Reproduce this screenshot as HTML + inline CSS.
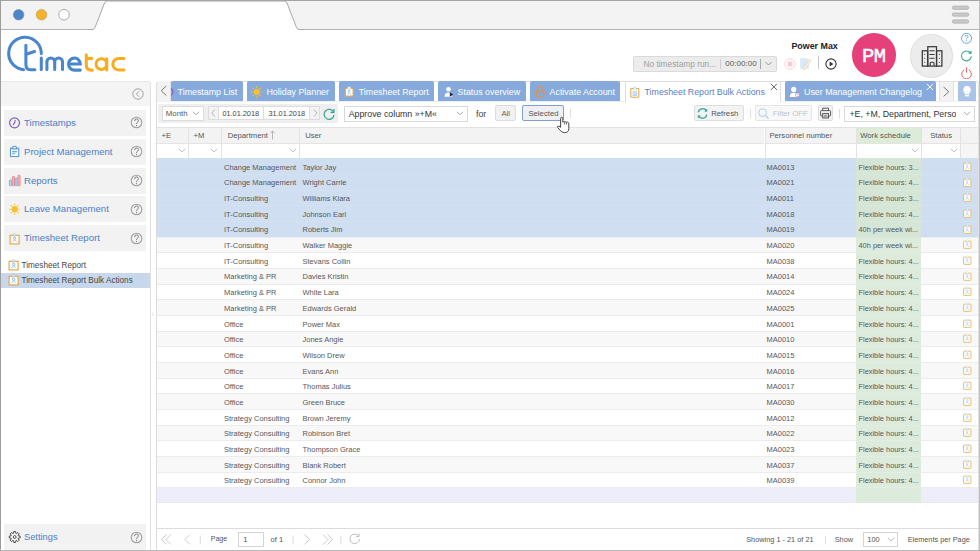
<!DOCTYPE html>
<html><head><meta charset="utf-8">
<style>
*{box-sizing:border-box;margin:0;padding:0}
html,body{width:980px;height:551px;overflow:hidden;background:#fff;font-family:"Liberation Sans",sans-serif;color:#333}
.a{position:absolute}
.nw{white-space:nowrap}
.mi{position:absolute;left:4px;width:142px;height:26px;background:#f2f2f2}
.mi .t{position:absolute;left:20px;top:7px;font-size:9.6px;color:#4a7fc6;white-space:nowrap}
.mi .q{position:absolute;left:126.5px;top:7px;width:11.5px;height:11.5px}
.tab{position:absolute;top:81px;height:20px;background:#86aadc;border-radius:2px 2px 0 0;color:#fff;font-size:8.85px}
.tab .t{position:absolute;top:5.5px;white-space:nowrap}
.row{position:absolute;left:157px;width:821px;height:15.67px;font-size:7.5px;color:#585858}
.row span{position:absolute;top:4.5px;white-space:nowrap}
.ws{position:absolute;left:856px;width:65px;height:15.67px;font-size:7.4px;color:#585858}
.ws span{position:absolute;left:2.5px;top:4.5px;white-space:nowrap}
.hd{position:absolute;top:128px;height:15px;background:#f3f3f3;font-size:7.7px;color:#555}
.hd span{position:absolute;top:2.9px;white-space:nowrap}
.ft{position:absolute;top:143px;height:15px;background:#fff;border-top:1px solid #e4e4e4}
.chev{position:absolute;width:6px;height:4px}
.btn{position:absolute;border:1px solid #d4d4d4;border-radius:2px;background:#f1f1f1;font-size:7.76px;color:#666}
.btn span{position:absolute;white-space:nowrap}
.pg{position:absolute;font-size:7.6px;color:#555;white-space:nowrap}

</style></head><body>
<!-- browser chrome -->
<svg class="a" style="left:0;top:0" width="980" height="31" viewBox="0 0 980 31">
<rect x="0" y="0" width="980" height="30" fill="#f3f3f3"/>
<line x1="0" y1="0.5" x2="980" y2="0.5" stroke="#a4a4a4" stroke-width="1"/>
<line x1="0" y1="29.5" x2="980" y2="29.5" stroke="#b2b2b2" stroke-width="1"/>
<path d="M90 30.5 L92 29.5 Q94 29.5 95 27.5 L104.5 3 Q105.5 1 107.5 1 L284 1 Q286 1 287 3 L296.5 27.5 Q297.5 29.5 299.5 29.5 L302 30.5 Z" fill="#fff" stroke="none"/>
<path d="M88 29.5 L92 29.5 Q94 29.5 95 27.5 L104.5 3 Q105.5 1 107.5 1 L284 1 Q286 1 287 3 L296.5 27.5 Q297.5 29.5 299.5 29.5 L304 29.5" fill="none" stroke="#a8a8a8" stroke-width="1"/>
<rect x="90" y="30" width="212" height="1" fill="#fff"/>
<circle cx="18.6" cy="14.7" r="5.3" fill="#4a86c8" stroke="#7a8ea8" stroke-width="0.6"/>
<circle cx="41.5" cy="14.7" r="5.3" fill="#f5b32c" stroke="#b89a5a" stroke-width="0.6"/>
<circle cx="64" cy="14.7" r="5.3" fill="#fff" stroke="#a0a0a0" stroke-width="0.9"/>
<rect x="952.2" y="6" width="16.6" height="3.4" rx="1.7" fill="#c8c8c8" stroke="#a8a8a8" stroke-width="0.6"/>
<rect x="952.2" y="12.9" width="16.6" height="3.4" rx="1.7" fill="#c8c8c8" stroke="#a8a8a8" stroke-width="0.6"/>
<rect x="952.2" y="19.8" width="16.6" height="3.4" rx="1.7" fill="#c8c8c8" stroke="#a8a8a8" stroke-width="0.6"/>
</svg>
<!-- logo -->
<svg class="a" style="left:0;top:30px" width="140" height="50" viewBox="0 30 140 50">
<g fill="none" stroke="#4a86cc" stroke-width="3.05" stroke-linecap="round">
<path d="M41.3 53.6 A16.3 16.3 0 1 0 23.6 69.7"/>
<path d="M25.9 45.3 V64.4 Q25.9 69.8 31.3 69.8 H34.9"/>
<path d="M26.2 54.2 L34.5 51.5"/>
<path d="M41.3 58.1 V69.6"/>
<path d="M46.9 69.5 V61.9 A3.9 3.9 0 0 1 54.7 61.9 V69.5 M54.7 61.9 A3.9 3.9 0 0 1 62.5 61.9 V69.5"/>
<path d="M68.5 64 H80.3 A5.9 6 0 1 0 74.4 70.1 H80.3"/>
</g>
<g fill="none" stroke="#f7ad1e" stroke-width="3.05" stroke-linecap="round">
<path d="M86.3 54.7 V65.3 Q86.3 70.1 91.1 70.1 H92.3"/>
<path d="M86.4 58.4 H91.8"/>
<circle cx="101.4" cy="64.1" r="5.3"/>
<path d="M106.7 58.8 V70"/>
<path d="M124 58.4 H118.6 A5.7 5.7 0 0 0 118.6 69.9 H124"/>
</g>
</svg>
<!-- header right -->
<div class="a" style="left:633px;top:56.3px;width:144px;height:15.5px;background:#ececec;border:1px solid #dadada;border-radius:2px"></div>
<div class="a nw" style="left:643.5px;top:59.4px;font-size:8.33px;color:#a0a0a0">No timestamp run...</div>
<div class="a" style="left:719.6px;top:58.6px;width:1px;height:10.5px;background:#d0d0d0"></div>
<div class="a nw" style="left:725.2px;top:59px;font-size:8.1px;color:#5a5a5a">00:00:00</div>
<div class="a" style="left:760.2px;top:58.6px;width:1px;height:10.5px;background:#a8a8a8"></div>
<svg class="a" style="left:764px;top:60px" width="9" height="7"><path d="M1.5 2 L4.5 5 L7.5 2" fill="none" stroke="#888" stroke-width="0.9"/></svg>
<div class="a nw" style="left:791.4px;top:40.6px;font-size:8.9px;font-weight:bold;color:#222">Power Max</div>
<svg class="a" style="left:782.5px;top:56.5px" width="14" height="14"><circle cx="7" cy="7" r="5.2" fill="none" stroke="#fbd4d8" stroke-width="1"/><rect x="4.6" y="4.5" width="4.9" height="5" fill="#f7cdd6"/></svg>
<svg class="a" style="left:799px;top:57px" width="14" height="14" viewBox="0 0 14 14"><path d="M1.2 1.3 H8.5 L9.8 2.6 V11.7 H1.2 Z" fill="#d6e8fa"/><path d="M4.3 11.2 L10.6 2.6 L12 3.6 L5.8 12.2 L4 12.6 Z" fill="#fff" stroke="#f2c880" stroke-width="0.7"/></svg>
<div class="a" style="left:818.2px;top:56.4px;width:0.8px;height:12.9px;background:#c8c8c8"></div>
<svg class="a" style="left:823.5px;top:56.5px" width="14" height="14"><circle cx="7" cy="7" r="5.1" fill="none" stroke="#333" stroke-width="1.1"/><path d="M5.6 4.6 L9.4 7 L5.6 9.4 Z" fill="#333"/></svg>
<div class="a" style="left:852px;top:33.4px;width:43.6px;height:43.6px;border-radius:50%;background:#e6407a"></div>
<div class="a nw" style="left:852px;top:44.6px;width:43.6px;text-align:center;font-size:20.5px;color:#fff;font-family:'Liberation Mono',monospace;letter-spacing:-0.5px;-webkit-text-stroke:0.5px #fff">PM</div>
<div class="a" style="left:909.7px;top:34.3px;width:43.8px;height:43.8px;border-radius:50%;background:#ececec;border:1px solid #dedede"></div>
<svg class="a" style="left:915px;top:40px" width="35" height="32" viewBox="915 40 35 32">
<g fill="none" stroke="#383838" stroke-width="1.25">
<rect x="922.3" y="50.8" width="5.3" height="15.3"/>
<rect x="936.6" y="50.8" width="5.3" height="15.3"/>
<rect x="927.8" y="46.7" width="8.7" height="19.4"/>
</g>
<g stroke="#383838" stroke-width="1.05" stroke-linecap="round">
<path d="M929.8 50.8 H934.2 M929.8 54.5 H934.2 M929.8 58.3 H934.2"/>
</g>
<g fill="#383838">
<circle cx="924.7" cy="54.2" r="0.55"/><circle cx="924.7" cy="58.3" r="0.55"/><circle cx="924.7" cy="62.3" r="0.55"/>
<circle cx="939.4" cy="54.2" r="0.55"/><circle cx="939.4" cy="58.3" r="0.55"/><circle cx="939.4" cy="62.3" r="0.55"/>
</g>
<path d="M930.2 66 V63.2 Q930.2 62.2 931.2 62.2 H933 Q934 62.2 934 63.2 V66" fill="none" stroke="#383838" stroke-width="1.1"/>
</svg>
<svg class="a" style="left:960px;top:32.3px" width="13" height="13"><circle cx="6.5" cy="6.3" r="5" fill="none" stroke="#5aa0dc" stroke-width="0.95"/><path d="M5 4.9 Q5 3.3 6.5 3.3 Q8 3.3 8 4.6 Q8 5.5 7.1 5.9 Q6.5 6.2 6.5 7 V7.3" fill="none" stroke="#5a9ada" stroke-width="0.85"/><circle cx="6.5" cy="8.8" r="0.55" fill="#5a9ada"/></svg>
<svg class="a" style="left:960px;top:48.5px" width="13" height="13"><path d="M10.4 4.1 A4.9 4.9 0 1 0 11.3 7.2" fill="none" stroke="#3aa597" stroke-width="1.05"/><path d="M8 4.6 L11.6 5 L11.4 1.4 Z" fill="#3aa597"/></svg>
<svg class="a" style="left:960px;top:65.5px" width="13" height="13"><path d="M4.2 3.8 A4.8 4.8 0 1 0 8.8 3.8" fill="none" stroke="#e86a6a" stroke-width="1"/><path d="M6.5 1.2 V6.5" stroke="#e86a6a" stroke-width="1"/></svg>
<!-- sidebar -->
<div class="a" style="left:1px;top:80.5px;width:150px;height:470px;border-top:1px solid #e6e6e6;border-right:1px solid #e0e0e0;border-radius:0 2px 0 0"></div>
<div class="a" style="left:1px;top:81.5px;width:149px;height:24.5px;background:#f4f4f4"></div>
<svg class="a" style="left:131.4px;top:87.4px" width="14" height="14"><circle cx="7" cy="7" r="5.2" fill="none" stroke="#9a9a9a" stroke-width="0.9"/><path d="M8.2 4.2 L5.4 7 L8.2 9.8" fill="none" stroke="#9a9a9a" stroke-width="0.9"/></svg>
<div class="mi" style="top:110px"><div class="t">Timestamps</div></div>
<div class="mi" style="top:138.8px"><div class="t">Project Management</div></div>
<div class="mi" style="top:167.6px"><div class="t">Reports</div></div>
<div class="mi" style="top:196.4px"><div class="t">Leave Management</div></div>
<div class="mi" style="top:225.2px"><div class="t">Timesheet Report</div></div>
<svg class="a" style="left:129.8px;top:116.4px" width="13" height="13"><circle cx="6.5" cy="6.5" r="5.3" fill="none" stroke="#a2a2a2" stroke-width="1.1"/><path d="M4.6 5.1 Q4.6 2.9 6.5 2.9 Q8.4 2.9 8.4 4.7 Q8.4 5.8 7.3 6.4 Q6.5 6.8 6.5 7.8 V8.1" fill="none" stroke="#7e7e7e" stroke-width="1"/><circle cx="6.5" cy="9.7" r="0.65" fill="#7e7e7e"/></svg>
<svg class="a" style="left:129.8px;top:145.2px" width="13" height="13"><circle cx="6.5" cy="6.5" r="5.3" fill="none" stroke="#a2a2a2" stroke-width="1.1"/><path d="M4.6 5.1 Q4.6 2.9 6.5 2.9 Q8.4 2.9 8.4 4.7 Q8.4 5.8 7.3 6.4 Q6.5 6.8 6.5 7.8 V8.1" fill="none" stroke="#7e7e7e" stroke-width="1"/><circle cx="6.5" cy="9.7" r="0.65" fill="#7e7e7e"/></svg>
<svg class="a" style="left:129.8px;top:174px" width="13" height="13"><circle cx="6.5" cy="6.5" r="5.3" fill="none" stroke="#a2a2a2" stroke-width="1.1"/><path d="M4.6 5.1 Q4.6 2.9 6.5 2.9 Q8.4 2.9 8.4 4.7 Q8.4 5.8 7.3 6.4 Q6.5 6.8 6.5 7.8 V8.1" fill="none" stroke="#7e7e7e" stroke-width="1"/><circle cx="6.5" cy="9.7" r="0.65" fill="#7e7e7e"/></svg>
<svg class="a" style="left:129.8px;top:202.8px" width="13" height="13"><circle cx="6.5" cy="6.5" r="5.3" fill="none" stroke="#a2a2a2" stroke-width="1.1"/><path d="M4.6 5.1 Q4.6 2.9 6.5 2.9 Q8.4 2.9 8.4 4.7 Q8.4 5.8 7.3 6.4 Q6.5 6.8 6.5 7.8 V8.1" fill="none" stroke="#7e7e7e" stroke-width="1"/><circle cx="6.5" cy="9.7" r="0.65" fill="#7e7e7e"/></svg>
<svg class="a" style="left:129.8px;top:231.6px" width="13" height="13"><circle cx="6.5" cy="6.5" r="5.3" fill="none" stroke="#a2a2a2" stroke-width="1.1"/><path d="M4.6 5.1 Q4.6 2.9 6.5 2.9 Q8.4 2.9 8.4 4.7 Q8.4 5.8 7.3 6.4 Q6.5 6.8 6.5 7.8 V8.1" fill="none" stroke="#7e7e7e" stroke-width="1"/><circle cx="6.5" cy="9.7" r="0.65" fill="#7e7e7e"/></svg>
<svg class="a" style="left:0;top:100px" width="30" height="160" viewBox="0 100 30 160">
<circle cx="14.55" cy="122.85" r="4.95" fill="none" stroke="#7a62b8" stroke-width="1.2"/>
<path d="M15.2 120.2 Q15.1 122.8 13.3 124.7" fill="none" stroke="#7a62b8" stroke-width="1.1" stroke-linecap="round"/>
<rect x="10.5" y="148.2" width="8.2" height="8.3" fill="#fff" stroke="#5b9ad8" stroke-width="1.1"/>
<path d="M12.3 148.9 Q12.3 146.3 14.5 146.3 Q16.7 146.3 16.7 148.9 Z" fill="#fff" stroke="#5b9ad8" stroke-width="1.1"/>
<rect x="12.2" y="151" width="4.8" height="1.4" fill="#6aa6e0"/>
<rect x="12.2" y="153" width="3" height="1.4" fill="#8ebce8"/>
<rect x="9.4" y="180" width="2.2" height="5.8" rx="0.6" fill="#b0d4f2" stroke="#6aa6e0" stroke-width="0.7"/>
<rect x="12.3" y="176.5" width="2.2" height="9.3" rx="0.6" fill="#f6b4b4" stroke="#f07474" stroke-width="0.7"/>
<rect x="15.1" y="178" width="2.1" height="7.8" rx="0.6" fill="#b0d4f2" stroke="#6aa6e0" stroke-width="0.7"/>
<rect x="17.9" y="175.2" width="2.2" height="10.6" rx="0.6" fill="#f6b4b4" stroke="#f07474" stroke-width="0.7"/>
<g fill="#f8c02a"><circle cx="14.7" cy="209.2" r="3.2"/></g>
<g stroke="#f8c02a" stroke-width="1.1" stroke-linecap="round">
<path d="M14.7 204 V204.6 M14.7 213.8 V214.4 M9.5 209.2 H10.1 M19.3 209.2 H19.9 M11 205.5 L11.4 205.9 M18 212.5 L18.4 212.9 M18.4 205.5 L18 205.9 M11.4 212.5 L11 212.9"/>
</g>
</svg>
<svg class="a" style="left:9px;top:232.5px" width="12" height="12" viewBox="0 0 12 12"><rect x="1.1" y="2.3" width="9" height="8.6" fill="#fff" stroke="#e2aa48" stroke-width="1.2"/><path d="M3.8 2.8 Q3.8 0.8 5.6 0.8 Q7.4 0.8 7.4 2.8 Z" fill="#fff" stroke="#b8b8b8" stroke-width="0.8"/><circle cx="5.6" cy="5.2" r="1.2" fill="none" stroke="#7ab0e0" stroke-width="0.8"/><path d="M3.6 8.8 L5.6 6.6 L7.6 8.8" fill="none" stroke="#7ab0e0" stroke-width="0.8"/></svg>
<svg class="a" style="left:7.6px;top:259px" width="12" height="12" viewBox="0 0 12 12"><rect x="1.1" y="2.3" width="9" height="8.6" fill="#fff" stroke="#e2aa48" stroke-width="1.2"/><path d="M3.8 2.8 Q3.8 0.8 5.6 0.8 Q7.4 0.8 7.4 2.8 Z" fill="#fff" stroke="#b8b8b8" stroke-width="0.8"/><circle cx="5.6" cy="5.2" r="1.2" fill="none" stroke="#7ab0e0" stroke-width="0.8"/><path d="M3.6 8.8 L5.6 6.6 L7.6 8.8" fill="none" stroke="#7ab0e0" stroke-width="0.8"/></svg>
<div class="a nw" style="left:21.5px;top:260.8px;font-size:8.17px;color:#474747">Timesheet Report</div>
<div class="a" style="left:1px;top:272.6px;width:149px;height:15px;background:#c8d8ec"></div>
<svg class="a" style="left:7.6px;top:274px" width="12" height="12" viewBox="0 0 12 12"><rect x="1.1" y="2.3" width="9" height="8.6" fill="#fff" stroke="#e2aa48" stroke-width="1.2"/><path d="M3.8 2.8 Q3.8 0.8 5.6 0.8 Q7.4 0.8 7.4 2.8 Z" fill="#fff" stroke="#b8b8b8" stroke-width="0.8"/><circle cx="5.6" cy="5.2" r="1.2" fill="none" stroke="#7ab0e0" stroke-width="0.8"/><path d="M3.6 8.8 L5.6 6.6 L7.6 8.8" fill="none" stroke="#7ab0e0" stroke-width="0.8"/></svg>
<div class="a nw" style="left:21.5px;top:275.8px;font-size:8.17px;color:#474747">Timesheet Report Bulk Actions</div>
<div class="mi" style="top:524px;height:26px"><div class="t" style="top:7.6px;font-size:9.3px">Settings</div></div>
<svg class="a" style="left:4px;top:526px" width="20" height="22" viewBox="4 526 20 22"><g transform="translate(14.7 537)"><path d="M3.73 -1.15 L5.42 -0.93 L5.42 0.93 L3.73 1.15 L3.45 1.82 L4.49 3.18 L3.18 4.49 L1.82 3.45 L1.15 3.73 L0.93 5.42 L-0.93 5.42 L-1.15 3.73 L-1.82 3.45 L-3.18 4.49 L-4.49 3.18 L-3.45 1.82 L-3.73 1.15 L-5.42 0.93 L-5.42 -0.93 L-3.73 -1.15 L-3.45 -1.82 L-4.49 -3.18 L-3.18 -4.49 L-1.82 -3.45 L-1.15 -3.73 L-0.93 -5.42 L0.93 -5.42 L1.15 -3.73 L1.82 -3.45 L3.18 -4.49 L4.49 -3.18 L3.45 -1.82 Z" fill="none" stroke="#4a4a4a" stroke-width="1" stroke-linejoin="round"/><circle r="1.4" fill="none" stroke="#4a4a4a" stroke-width="0.9"/></g></svg>
<svg class="a" style="left:129.8px;top:530.6px" width="13" height="13"><circle cx="6.5" cy="6.5" r="5.3" fill="none" stroke="#a2a2a2" stroke-width="1.1"/><path d="M4.6 5.1 Q4.6 2.9 6.5 2.9 Q8.4 2.9 8.4 4.7 Q8.4 5.8 7.3 6.4 Q6.5 6.8 6.5 7.8 V8.1" fill="none" stroke="#7e7e7e" stroke-width="1"/><circle cx="6.5" cy="9.7" r="0.65" fill="#7e7e7e"/></svg>
<div class="a" style="left:151.5px;top:309px;font-size:9px;color:#ddd">&#8249;</div>

<!-- main panel -->
<div class="a" style="left:156px;top:80.5px;width:823px;height:470px;border-left:1px solid #dcdcdc;border-top:1px solid #e0e0e0;border-right:1px solid #e2e2e2;border-radius:3px 3px 0 0"></div>
<div class="a" style="left:157px;top:101.3px;width:821px;height:1px;background:#f0f0f0"></div>
<!-- tabs -->
<div class="tab" style="left:171px;width:71.6px"><span class="t" style="left:6.6px">Timestamp List</span></div>
<div class="a" style="left:157px;top:81px;width:14px;height:20.3px;background:#f3f3f3;border-right:1px solid #e2e2e2"></div>
<svg class="a" style="left:157px;top:82px" width="14" height="16" viewBox="157 82 14 16"><path d="M166.3 86 L161.2 90.7 L166.3 95.5" fill="none" stroke="#707070" stroke-width="0.95"/></svg>
<div class="tab" style="left:247.1px;width:87.8px"><span class="t" style="left:19.4px">Holiday Planner</span></div>
<div class="tab" style="left:339.4px;width:94.5px"><span class="t" style="left:19.4px">Timesheet Report</span></div>
<div class="tab" style="left:438px;width:87.5px"><span class="t" style="left:19.6px">Status overview</span></div>
<div class="tab" style="left:529.8px;width:90.2px"><span class="t" style="left:19.8px">Activate Account</span></div>
<div class="a" style="left:624.5px;top:80.5px;width:156px;height:21.5px;background:#fff;border:1px solid #dedede;border-bottom:none;border-radius:2px 2px 0 0"></div>
<div class="a nw" style="left:644.5px;top:86.5px;font-size:8.83px;color:#5a80c4">Timesheet Report Bulk Actions</div>
<div class="tab" style="left:784.5px;width:151.5px"><span class="t" style="left:19.5px">User Management Changelog</span></div>
<div class="a" style="left:939px;top:81px;width:14.5px;height:20.3px;background:#f3f3f3;border:1px solid #e2e2e2;border-bottom:none"></div>
<svg class="a" style="left:939px;top:82px" width="15" height="16" viewBox="939 82 15 16"><path d="M943.6 87 L948.8 91.7 L943.6 96.4" fill="none" stroke="#707070" stroke-width="0.95"/></svg>
<div class="a" style="left:958px;top:81px;width:18px;height:20.3px;background:#a9c4e8;border-radius:2px 2px 0 0"></div>
<svg class="a" style="left:960px;top:84px" width="14" height="14"><path d="M7 1.8 A4 4 0 0 1 9.5 8.8 V10.2 H4.5 V8.8 A4 4 0 0 1 7 1.8 Z" fill="#fff"/><rect x="5" y="11" width="4" height="1.4" fill="#fff"/></svg>
<svg class="a" style="left:769px;top:81.5px" width="10" height="10"><path d="M1.8 1.8 L8 8 M8 1.8 L1.8 8" stroke="#666" stroke-width="1"/></svg>
<svg class="a" style="left:925px;top:81.5px" width="10" height="10"><path d="M1.8 1.8 L8 8 M8 1.8 L1.8 8" stroke="#fff" stroke-width="1"/></svg>
<svg class="a" style="left:160px;top:80px" width="820" height="22" viewBox="160 80 820 22">
<path d="M171 88.6 A3.8 3.8 0 0 1 171 95.2" fill="none" stroke="#7a62b8" stroke-width="1.1"/>
<circle cx="256.7" cy="91.9" r="3.1" fill="#f8c02a"/>
<g stroke="#f8c02a" stroke-width="1.2" stroke-linecap="round"><path d="M256.7 86.6 V87.3 M256.7 96.5 V97.2 M251.4 91.9 H252.1 M261.3 91.9 H262 M253 88.2 L253.5 88.7 M259.9 95.1 L260.4 95.6 M260.4 88.2 L259.9 88.7 M253.5 95.1 L253 95.6"/></g>
<rect x="345.3" y="88.5" width="7.8" height="7.6" fill="#fff" stroke="#e4a848" stroke-width="1.1"/>
<path d="M347.5 89 Q347.5 86.8 349.2 86.8 Q350.9 86.8 350.9 89 Z" fill="#fff" stroke="#ccc" stroke-width="0.6"/>
<circle cx="349.2" cy="91" r="1" fill="none" stroke="#8ab8e4" stroke-width="0.7"/>
<path d="M347.4 94.6 L349.2 92.6 L351 94.6" fill="none" stroke="#8ab8e4" stroke-width="0.7"/>
<circle cx="448.5" cy="89.3" r="2.3" fill="#fff"/>
<path d="M444.6 96.8 Q444.6 92.6 448.5 92.6 Q452.3 92.6 452.3 96.8 Z" fill="#fff"/>
<path d="M449.8 92.3 L453.2 94.5 L449.8 96.8 Z" fill="#222"/>
<path d="M537.8 90.6 V88.8 A2.3 2.3 0 0 1 542.4 88.4" fill="none" stroke="#e8903a" stroke-width="1.1" stroke-linecap="round"/>
<rect x="536.4" y="90.7" width="7.6" height="5.8" rx="0.8" fill="none" stroke="#e8903a" stroke-width="1.1"/>
<ellipse cx="540.2" cy="93.6" rx="1" ry="0.6" fill="#e8903a"/>
<rect x="630.8" y="88.5" width="8" height="8.7" rx="0.6" fill="#fff" stroke="#e2ac4a" stroke-width="1.1"/>
<path d="M633.2 89.3 Q633.2 87 634.8 87 Q636.4 87 636.4 89.3 Z" fill="#fff" stroke="#bbb" stroke-width="0.6"/>
<rect x="632.6" y="91" width="4.6" height="5" fill="#b4d6f4"/>
<path d="M633.2 92.3 H636.6 M633.2 94 H636" stroke="#fff" stroke-width="0.6"/>
<circle cx="793.7" cy="89.4" r="2.6" fill="#fff"/>
<path d="M789.8 97 Q789.8 92.8 793.7 92.8 Q797.2 92.8 797.3 95 L797.3 97 Z" fill="#fff"/>
<circle cx="797.6" cy="94.8" r="2.1" fill="#fff" stroke="#d27aa8" stroke-width="0.7"/>
<path d="M797.6 93.6 V94.9 H798.6" fill="none" stroke="#b05a90" stroke-width="0.5"/>
</svg>

<!-- toolbar -->
<div class="a" style="left:158.2px;top:103.8px;width:180.3px;height:18.9px;background:#efefef;border-radius:2px"></div>
<div class="a" style="left:161.8px;top:105.6px;width:42.4px;height:15px;background:#fff;border:1px solid #dcdcdc"></div>
<div class="a nw" style="left:165.8px;top:109px;font-size:7.8px;color:#555">Month</div>
<svg class="a" style="left:192.4px;top:110.6px" width="8" height="5" viewBox="0 0 8 5"><path d="M0.8 0.8 L4 3.8 L7.2 0.8" fill="none" stroke="#999" stroke-width="0.8"/></svg>
<div class="a" style="left:208.2px;top:105.8px;width:10.4px;height:14.6px;background:#f3f3f3;border:1px solid #dcdcdc"></div>
<svg class="a" style="left:208px;top:106px" width="11" height="14"><path d="M6.8 3.5 L3.8 7 L6.8 10.5" fill="none" stroke="#aaa" stroke-width="0.9"/></svg>
<div class="a" style="left:217.6px;top:105.8px;width:46.5px;height:14.6px;background:#fff;border:1px solid #dcdcdc"></div>
<div class="a" style="left:263.4px;top:105.8px;width:46.5px;height:14.6px;background:#fff;border:1px solid #dcdcdc"></div>
<div class="a nw" style="left:222.4px;top:109.1px;font-size:7.33px;color:#444">01.01.2018</div>
<div class="a nw" style="left:268.4px;top:109.1px;font-size:7.33px;color:#444">31.01.2018</div>
<div class="a" style="left:309.2px;top:105.8px;width:11px;height:14.6px;background:#f3f3f3;border:1px solid #dcdcdc"></div>
<svg class="a" style="left:309.5px;top:106px" width="11" height="14"><path d="M4 3.5 L7 7 L4 10.5" fill="none" stroke="#aaa" stroke-width="0.9"/></svg>
<svg class="a" style="left:321.5px;top:106.5px" width="14" height="14"><path d="M11.6 5.2 A5 5 0 1 0 12 8.2" fill="none" stroke="#3aa597" stroke-width="1.3"/><path d="M8.5 5.3 L11.9 5.5 L12 1.9" fill="none" stroke="#3aa597" stroke-width="1.3"/></svg>
<div class="a" style="left:344.1px;top:105.5px;width:124.2px;height:16px;background:#fff;border:1px solid #d8d8d8"></div>
<div class="a nw" style="left:348.7px;top:108.8px;font-size:8.8px;color:#333">Approve column &#187;+M&#171;</div>
<svg class="a" style="left:456.0px;top:110.8px" width="8" height="5" viewBox="0 0 8 5"><path d="M0.8 0.8 L4 3.8 L7.2 0.8" fill="none" stroke="#999" stroke-width="0.8"/></svg>
<div class="a nw" style="left:476px;top:108.8px;font-size:8.8px;color:#444">for</div>
<div class="btn" style="left:495.4px;top:105.3px;width:20.8px;height:15.5px;border-color:#dcdcdc"><span style="left:5px;top:2.7px">All</span></div>
<div class="btn" style="left:522px;top:105.3px;width:42.2px;height:15.5px;border-color:#7ea0d4;background:#eef0f4"><span style="left:5.4px;top:2.7px;color:#555">Selected</span></div>
<div class="a" style="left:570px;top:109px;width:1px;height:9px;background:#ddd"></div>
<div class="btn" style="left:694.4px;top:105.2px;width:50.1px;height:15.6px;border-color:#dedede;background:#f3f3f3"><span style="left:15.8px;top:3px;color:#555">Refresh</span></div>
<svg class="a" style="left:695.5px;top:106.5px" width="13" height="13" viewBox="0 0 13 13"><g fill="none" stroke="#3aa597" stroke-width="1.3"><path d="M2.2 5.3 A4.5 4.5 0 0 1 10.4 3.8"/><path d="M10.8 7.7 A4.5 4.5 0 0 1 2.6 9.2"/></g><path d="M8.2 4.4 L11.3 4.8 L11.2 1.6 Z M4.8 8.6 L1.7 8.2 L1.8 11.4 Z" fill="#3aa597"/></svg>
<div class="a" style="left:750.2px;top:108.5px;width:1px;height:9.5px;background:#ddd"></div>
<div class="btn" style="left:755.4px;top:105.2px;width:56.5px;height:15.6px;background:#f8f8f8;border-color:#e6e6e6"><span style="left:16.4px;top:3px;color:#c4c4c4">Filter OFF</span></div>
<svg class="a" style="left:757px;top:107px" width="13" height="13"><circle cx="5.6" cy="5.6" r="3.9" fill="none" stroke="#a8cdee" stroke-width="1"/><path d="M8.4 8.4 L11.5 11.5" stroke="#a8cdee" stroke-width="1.1"/></svg>
<div class="btn" style="left:818px;top:105.2px;width:14.7px;height:15.6px;border-color:#dedede;background:#f3f3f3"></div>
<svg class="a" style="left:815px;top:104px" width="20" height="18" viewBox="815 104 20 18"><g fill="none" stroke="#474747" stroke-width="0.9"><path d="M822.7 110.6 V108.2 H828.5 V110.6"/><rect x="820.6" y="110.6" width="10" height="5.4" rx="0.8"/><rect x="822.7" y="113.6" width="5.8" height="4.4" fill="#f3f3f3"/><path d="M823.8 115.3 H827.4 M823.8 116.7 H827.4" stroke-width="0.6"/></g></svg>
<div class="a" style="left:839px;top:108.5px;width:1px;height:9.5px;background:#ddd"></div>
<div class="a" style="left:844px;top:105.5px;width:131px;height:16px;background:#fff;border:1px solid #d8d8d8"></div>
<div class="a nw" style="left:849.4px;top:109px;font-size:8.8px;color:#333;width:106.8px;overflow:hidden">+E, +M, Department, Personnel</div>
<svg class="a" style="left:962.5px;top:111.2px" width="8" height="5" viewBox="0 0 8 5"><path d="M0.8 0.8 L4 3.8 L7.2 0.8" fill="none" stroke="#999" stroke-width="0.8"/></svg>
<!-- grid header -->
<div class="a" style="left:157px;top:127.3px;width:821px;height:1px;background:#e2e2e2"></div>
<div class="hd" style="left:157px;width:31.0px;"><span style="left:4.4px">+E</span></div>
<div class="hd" style="left:188px;width:33.2px;border-left:1px solid #e2e2e2;"><span style="left:4.4px">+M</span></div>
<div class="hd" style="left:221.2px;width:78.2px;border-left:1px solid #e2e2e2;"><span style="left:5.5px">Department</span><svg style="position:absolute;left:47px;top:1.5px" width="7" height="10"><path d="M3.5 1 V9.5 M1.2 3.3 L3.5 1 L5.8 3.3" fill="none" stroke="#999" stroke-width="0.7"/></svg></div>
<div class="hd" style="left:299.4px;width:465.1px;border-left:1px solid #e2e2e2;"><span style="left:4.8px">User</span></div>
<div class="hd" style="left:764.5px;width:91.1px;border-left:1px solid #e2e2e2;"><span style="left:3.9px">Personnel number</span></div>
<div class="hd" style="left:855.6px;width:65.6px;border-left:1px solid #e2e2e2;background:#dcecd9;"><span style="left:3.6px">Work schedule</span></div>
<div class="hd" style="left:921.2px;width:39.2px;border-left:1px solid #e2e2e2;"><span style="left:8px">Status</span></div>
<div class="hd" style="left:960.4px;width:17.6px;border-left:1px solid #e2e2e2;"></div>
<div class="ft" style="left:157px;width:31.0px;"></div>
<div class="ft" style="left:188px;width:33.2px;border-left:1px solid #e2e2e2;"></div>
<div class="ft" style="left:221.2px;width:78.2px;border-left:1px solid #e2e2e2;"></div>
<div class="ft" style="left:299.4px;width:465.1px;border-left:1px solid #e2e2e2;"></div>
<div class="ft" style="left:764.5px;width:91.1px;border-left:1px solid #e2e2e2;"></div>
<div class="ft" style="left:855.6px;width:65.6px;border-left:1px solid #e2e2e2;"></div>
<div class="ft" style="left:921.2px;width:39.2px;border-left:1px solid #e2e2e2;"></div>
<div class="ft" style="left:960.4px;width:17.6px;border-left:1px solid #e2e2e2;background:#f5f5f5;"></div>
<svg class="a" style="left:177.8px;top:148.2px" width="8" height="5" viewBox="0 0 8 5"><path d="M0.8 0.8 L4 3.8 L7.2 0.8" fill="none" stroke="#aaa" stroke-width="0.8"/></svg>
<svg class="a" style="left:210.3px;top:148.2px" width="8" height="5" viewBox="0 0 8 5"><path d="M0.8 0.8 L4 3.8 L7.2 0.8" fill="none" stroke="#aaa" stroke-width="0.8"/></svg>
<svg class="a" style="left:288.6px;top:148.2px" width="8" height="5" viewBox="0 0 8 5"><path d="M0.8 0.8 L4 3.8 L7.2 0.8" fill="none" stroke="#aaa" stroke-width="0.8"/></svg>
<svg class="a" style="left:910.5px;top:148.2px" width="8" height="5" viewBox="0 0 8 5"><path d="M0.8 0.8 L4 3.8 L7.2 0.8" fill="none" stroke="#aaa" stroke-width="0.8"/></svg>
<svg class="a" style="left:950.0px;top:148.2px" width="8" height="5" viewBox="0 0 8 5"><path d="M0.8 0.8 L4 3.8 L7.2 0.8" fill="none" stroke="#aaa" stroke-width="0.8"/></svg>
<div class="a" style="left:157px;top:157.8px;width:821px;height:1px;background:#dedede"></div>
<div class="a row" style="top:158.30px;background:#cfdef0"><span style="left:67px">Change Management</span><span style="left:145.5px">Taylor Jay</span><span style="left:609.5px">MA0013</span></div>
<div class="a ws" style="top:158.30px;background:#d5e6d6"><span>Flexible hours: 3...</span></div>
<svg class="a" style="left:961px;top:160.90px" width="12" height="12" viewBox="0 0 12 12"><rect x="2.6" y="2.2" width="7.3" height="7.2" rx="0.5" fill="#fff" stroke="#e8b860" stroke-width="0.9"/><path d="M4.8 2.6 Q4.8 0.9 6.25 0.9 Q7.7 0.9 7.7 2.6 Z" fill="#fff" stroke="#d6d6d6" stroke-width="0.6"/><circle cx="6.25" cy="4.6" r="0.9" fill="none" stroke="#9cc6ec" stroke-width="0.6"/><path d="M4.7 7.9 L6.25 5.9 L7.8 7.9" fill="none" stroke="#9cc6ec" stroke-width="0.6"/></svg>
<div class="a row" style="top:173.97px;background:#cfdef0"><span style="left:67px">Change Management</span><span style="left:145.5px">Wright Carrie</span><span style="left:609.5px">MA0021</span></div>
<div class="a ws" style="top:173.97px;background:#d5e6d6"><span>Flexible hours: 4...</span></div>
<svg class="a" style="left:961px;top:176.57px" width="12" height="12" viewBox="0 0 12 12"><rect x="2.6" y="2.2" width="7.3" height="7.2" rx="0.5" fill="#fff" stroke="#e8b860" stroke-width="0.9"/><path d="M4.8 2.6 Q4.8 0.9 6.25 0.9 Q7.7 0.9 7.7 2.6 Z" fill="#fff" stroke="#d6d6d6" stroke-width="0.6"/><circle cx="6.25" cy="4.6" r="0.9" fill="none" stroke="#9cc6ec" stroke-width="0.6"/><path d="M4.7 7.9 L6.25 5.9 L7.8 7.9" fill="none" stroke="#9cc6ec" stroke-width="0.6"/></svg>
<div class="a row" style="top:189.64px;background:#cfdef0"><span style="left:67px">IT-Consulting</span><span style="left:145.5px">Williams Kiara</span><span style="left:609.5px">MA0011</span></div>
<div class="a ws" style="top:189.64px;background:#d5e6d6"><span>Flexible hours: 3...</span></div>
<svg class="a" style="left:961px;top:192.24px" width="12" height="12" viewBox="0 0 12 12"><rect x="2.6" y="2.2" width="7.3" height="7.2" rx="0.5" fill="#fff" stroke="#e8b860" stroke-width="0.9"/><path d="M4.8 2.6 Q4.8 0.9 6.25 0.9 Q7.7 0.9 7.7 2.6 Z" fill="#fff" stroke="#d6d6d6" stroke-width="0.6"/><circle cx="6.25" cy="4.6" r="0.9" fill="none" stroke="#9cc6ec" stroke-width="0.6"/><path d="M4.7 7.9 L6.25 5.9 L7.8 7.9" fill="none" stroke="#9cc6ec" stroke-width="0.6"/></svg>
<div class="a row" style="top:205.31px;background:#cfdef0"><span style="left:67px">IT-Consulting</span><span style="left:145.5px">Johnson Earl</span><span style="left:609.5px">MA0018</span></div>
<div class="a ws" style="top:205.31px;background:#d5e6d6"><span>Flexible hours: 4...</span></div>
<svg class="a" style="left:961px;top:207.91px" width="12" height="12" viewBox="0 0 12 12"><rect x="2.6" y="2.2" width="7.3" height="7.2" rx="0.5" fill="#fff" stroke="#e8b860" stroke-width="0.9"/><path d="M4.8 2.6 Q4.8 0.9 6.25 0.9 Q7.7 0.9 7.7 2.6 Z" fill="#fff" stroke="#d6d6d6" stroke-width="0.6"/><circle cx="6.25" cy="4.6" r="0.9" fill="none" stroke="#9cc6ec" stroke-width="0.6"/><path d="M4.7 7.9 L6.25 5.9 L7.8 7.9" fill="none" stroke="#9cc6ec" stroke-width="0.6"/></svg>
<div class="a row" style="top:220.98px;background:#cfdef0"><span style="left:67px">IT-Consulting</span><span style="left:145.5px">Roberts Jim</span><span style="left:609.5px">MA0019</span></div>
<div class="a ws" style="top:220.98px;background:#d5e6d6"><span>40h per week wi...</span></div>
<svg class="a" style="left:961px;top:223.58px" width="12" height="12" viewBox="0 0 12 12"><rect x="2.6" y="2.2" width="7.3" height="7.2" rx="0.5" fill="#fff" stroke="#e8b860" stroke-width="0.9"/><path d="M4.8 2.6 Q4.8 0.9 6.25 0.9 Q7.7 0.9 7.7 2.6 Z" fill="#fff" stroke="#d6d6d6" stroke-width="0.6"/><circle cx="6.25" cy="4.6" r="0.9" fill="none" stroke="#9cc6ec" stroke-width="0.6"/><path d="M4.7 7.9 L6.25 5.9 L7.8 7.9" fill="none" stroke="#9cc6ec" stroke-width="0.6"/></svg>
<div class="a row" style="top:236.65px;background:#f8f8f8"><span style="left:67px">IT-Consulting</span><span style="left:145.5px">Walker Maggie</span><span style="left:609.5px">MA0020</span></div>
<div class="a ws" style="top:236.65px;background:#dcebdc"><span>40h per week wi...</span></div>
<svg class="a" style="left:961px;top:239.25px" width="12" height="12" viewBox="0 0 12 12"><rect x="2.6" y="2.2" width="7.3" height="7.2" rx="0.5" fill="#fff" stroke="#e8b860" stroke-width="0.9"/><path d="M4.8 2.6 Q4.8 0.9 6.25 0.9 Q7.7 0.9 7.7 2.6 Z" fill="#fff" stroke="#d6d6d6" stroke-width="0.6"/><circle cx="6.25" cy="4.6" r="0.9" fill="none" stroke="#9cc6ec" stroke-width="0.6"/><path d="M4.7 7.9 L6.25 5.9 L7.8 7.9" fill="none" stroke="#9cc6ec" stroke-width="0.6"/></svg>
<div class="a row" style="top:252.32px;background:#ffffff"><span style="left:67px">IT-Consulting</span><span style="left:145.5px">Stevans Collin</span><span style="left:609.5px">MA0038</span></div>
<div class="a ws" style="top:252.32px;background:#dcebdc"><span>Flexible hours: 4...</span></div>
<svg class="a" style="left:961px;top:254.92px" width="12" height="12" viewBox="0 0 12 12"><rect x="2.6" y="2.2" width="7.3" height="7.2" rx="0.5" fill="#fff" stroke="#e8b860" stroke-width="0.9"/><path d="M4.8 2.6 Q4.8 0.9 6.25 0.9 Q7.7 0.9 7.7 2.6 Z" fill="#fff" stroke="#d6d6d6" stroke-width="0.6"/><circle cx="6.25" cy="4.6" r="0.9" fill="none" stroke="#9cc6ec" stroke-width="0.6"/><path d="M4.7 7.9 L6.25 5.9 L7.8 7.9" fill="none" stroke="#9cc6ec" stroke-width="0.6"/></svg>
<div class="a row" style="top:267.99px;background:#f8f8f8"><span style="left:67px">Marketing &amp; PR</span><span style="left:145.5px">Davies Kristin</span><span style="left:609.5px">MA0014</span></div>
<div class="a ws" style="top:267.99px;background:#dcebdc"><span>Flexible hours: 4...</span></div>
<svg class="a" style="left:961px;top:270.59px" width="12" height="12" viewBox="0 0 12 12"><rect x="2.6" y="2.2" width="7.3" height="7.2" rx="0.5" fill="#fff" stroke="#e8b860" stroke-width="0.9"/><path d="M4.8 2.6 Q4.8 0.9 6.25 0.9 Q7.7 0.9 7.7 2.6 Z" fill="#fff" stroke="#d6d6d6" stroke-width="0.6"/><circle cx="6.25" cy="4.6" r="0.9" fill="none" stroke="#9cc6ec" stroke-width="0.6"/><path d="M4.7 7.9 L6.25 5.9 L7.8 7.9" fill="none" stroke="#9cc6ec" stroke-width="0.6"/></svg>
<div class="a row" style="top:283.66px;background:#ffffff"><span style="left:67px">Marketing &amp; PR</span><span style="left:145.5px">White Lara</span><span style="left:609.5px">MA0024</span></div>
<div class="a ws" style="top:283.66px;background:#dcebdc"><span>Flexible hours: 4...</span></div>
<svg class="a" style="left:961px;top:286.26px" width="12" height="12" viewBox="0 0 12 12"><rect x="2.6" y="2.2" width="7.3" height="7.2" rx="0.5" fill="#fff" stroke="#e8b860" stroke-width="0.9"/><path d="M4.8 2.6 Q4.8 0.9 6.25 0.9 Q7.7 0.9 7.7 2.6 Z" fill="#fff" stroke="#d6d6d6" stroke-width="0.6"/><circle cx="6.25" cy="4.6" r="0.9" fill="none" stroke="#9cc6ec" stroke-width="0.6"/><path d="M4.7 7.9 L6.25 5.9 L7.8 7.9" fill="none" stroke="#9cc6ec" stroke-width="0.6"/></svg>
<div class="a row" style="top:299.33px;background:#f8f8f8"><span style="left:67px">Marketing &amp; PR</span><span style="left:145.5px">Edwards Gerald</span><span style="left:609.5px">MA0025</span></div>
<div class="a ws" style="top:299.33px;background:#dcebdc"><span>Flexible hours: 4...</span></div>
<svg class="a" style="left:961px;top:301.93px" width="12" height="12" viewBox="0 0 12 12"><rect x="2.6" y="2.2" width="7.3" height="7.2" rx="0.5" fill="#fff" stroke="#e8b860" stroke-width="0.9"/><path d="M4.8 2.6 Q4.8 0.9 6.25 0.9 Q7.7 0.9 7.7 2.6 Z" fill="#fff" stroke="#d6d6d6" stroke-width="0.6"/><circle cx="6.25" cy="4.6" r="0.9" fill="none" stroke="#9cc6ec" stroke-width="0.6"/><path d="M4.7 7.9 L6.25 5.9 L7.8 7.9" fill="none" stroke="#9cc6ec" stroke-width="0.6"/></svg>
<div class="a row" style="top:315.00px;background:#ffffff"><span style="left:67px">Office</span><span style="left:145.5px">Power Max</span><span style="left:609.5px">MA0001</span></div>
<div class="a ws" style="top:315.00px;background:#dcebdc"><span>Flexible hours: 4...</span></div>
<svg class="a" style="left:961px;top:317.60px" width="12" height="12" viewBox="0 0 12 12"><rect x="2.6" y="2.2" width="7.3" height="7.2" rx="0.5" fill="#fff" stroke="#e8b860" stroke-width="0.9"/><path d="M4.8 2.6 Q4.8 0.9 6.25 0.9 Q7.7 0.9 7.7 2.6 Z" fill="#fff" stroke="#d6d6d6" stroke-width="0.6"/><circle cx="6.25" cy="4.6" r="0.9" fill="none" stroke="#9cc6ec" stroke-width="0.6"/><path d="M4.7 7.9 L6.25 5.9 L7.8 7.9" fill="none" stroke="#9cc6ec" stroke-width="0.6"/></svg>
<div class="a row" style="top:330.67px;background:#f8f8f8"><span style="left:67px">Office</span><span style="left:145.5px">Jones Angie</span><span style="left:609.5px">MA0010</span></div>
<div class="a ws" style="top:330.67px;background:#dcebdc"><span>Flexible hours: 4...</span></div>
<svg class="a" style="left:961px;top:333.27px" width="12" height="12" viewBox="0 0 12 12"><rect x="2.6" y="2.2" width="7.3" height="7.2" rx="0.5" fill="#fff" stroke="#e8b860" stroke-width="0.9"/><path d="M4.8 2.6 Q4.8 0.9 6.25 0.9 Q7.7 0.9 7.7 2.6 Z" fill="#fff" stroke="#d6d6d6" stroke-width="0.6"/><circle cx="6.25" cy="4.6" r="0.9" fill="none" stroke="#9cc6ec" stroke-width="0.6"/><path d="M4.7 7.9 L6.25 5.9 L7.8 7.9" fill="none" stroke="#9cc6ec" stroke-width="0.6"/></svg>
<div class="a row" style="top:346.34px;background:#ffffff"><span style="left:67px">Office</span><span style="left:145.5px">Wilson Drew</span><span style="left:609.5px">MA0015</span></div>
<div class="a ws" style="top:346.34px;background:#dcebdc"><span>Flexible hours: 4...</span></div>
<svg class="a" style="left:961px;top:348.94px" width="12" height="12" viewBox="0 0 12 12"><rect x="2.6" y="2.2" width="7.3" height="7.2" rx="0.5" fill="#fff" stroke="#e8b860" stroke-width="0.9"/><path d="M4.8 2.6 Q4.8 0.9 6.25 0.9 Q7.7 0.9 7.7 2.6 Z" fill="#fff" stroke="#d6d6d6" stroke-width="0.6"/><circle cx="6.25" cy="4.6" r="0.9" fill="none" stroke="#9cc6ec" stroke-width="0.6"/><path d="M4.7 7.9 L6.25 5.9 L7.8 7.9" fill="none" stroke="#9cc6ec" stroke-width="0.6"/></svg>
<div class="a row" style="top:362.01px;background:#f8f8f8"><span style="left:67px">Office</span><span style="left:145.5px">Evans Ann</span><span style="left:609.5px">MA0016</span></div>
<div class="a ws" style="top:362.01px;background:#dcebdc"><span>Flexible hours: 4...</span></div>
<svg class="a" style="left:961px;top:364.61px" width="12" height="12" viewBox="0 0 12 12"><rect x="2.6" y="2.2" width="7.3" height="7.2" rx="0.5" fill="#fff" stroke="#e8b860" stroke-width="0.9"/><path d="M4.8 2.6 Q4.8 0.9 6.25 0.9 Q7.7 0.9 7.7 2.6 Z" fill="#fff" stroke="#d6d6d6" stroke-width="0.6"/><circle cx="6.25" cy="4.6" r="0.9" fill="none" stroke="#9cc6ec" stroke-width="0.6"/><path d="M4.7 7.9 L6.25 5.9 L7.8 7.9" fill="none" stroke="#9cc6ec" stroke-width="0.6"/></svg>
<div class="a row" style="top:377.68px;background:#ffffff"><span style="left:67px">Office</span><span style="left:145.5px">Thomas Julius</span><span style="left:609.5px">MA0017</span></div>
<div class="a ws" style="top:377.68px;background:#dcebdc"><span>Flexible hours: 4...</span></div>
<svg class="a" style="left:961px;top:380.28px" width="12" height="12" viewBox="0 0 12 12"><rect x="2.6" y="2.2" width="7.3" height="7.2" rx="0.5" fill="#fff" stroke="#e8b860" stroke-width="0.9"/><path d="M4.8 2.6 Q4.8 0.9 6.25 0.9 Q7.7 0.9 7.7 2.6 Z" fill="#fff" stroke="#d6d6d6" stroke-width="0.6"/><circle cx="6.25" cy="4.6" r="0.9" fill="none" stroke="#9cc6ec" stroke-width="0.6"/><path d="M4.7 7.9 L6.25 5.9 L7.8 7.9" fill="none" stroke="#9cc6ec" stroke-width="0.6"/></svg>
<div class="a row" style="top:393.35px;background:#f8f8f8"><span style="left:67px">Office</span><span style="left:145.5px">Green Bruce</span><span style="left:609.5px">MA0030</span></div>
<div class="a ws" style="top:393.35px;background:#dcebdc"><span>Flexible hours: 4...</span></div>
<svg class="a" style="left:961px;top:395.95px" width="12" height="12" viewBox="0 0 12 12"><rect x="2.6" y="2.2" width="7.3" height="7.2" rx="0.5" fill="#fff" stroke="#e8b860" stroke-width="0.9"/><path d="M4.8 2.6 Q4.8 0.9 6.25 0.9 Q7.7 0.9 7.7 2.6 Z" fill="#fff" stroke="#d6d6d6" stroke-width="0.6"/><circle cx="6.25" cy="4.6" r="0.9" fill="none" stroke="#9cc6ec" stroke-width="0.6"/><path d="M4.7 7.9 L6.25 5.9 L7.8 7.9" fill="none" stroke="#9cc6ec" stroke-width="0.6"/></svg>
<div class="a row" style="top:409.02px;background:#ffffff"><span style="left:67px">Strategy Consulting</span><span style="left:145.5px">Brown Jeremy</span><span style="left:609.5px">MA0012</span></div>
<div class="a ws" style="top:409.02px;background:#dcebdc"><span>Flexible hours: 4...</span></div>
<svg class="a" style="left:961px;top:411.62px" width="12" height="12" viewBox="0 0 12 12"><rect x="2.6" y="2.2" width="7.3" height="7.2" rx="0.5" fill="#fff" stroke="#e8b860" stroke-width="0.9"/><path d="M4.8 2.6 Q4.8 0.9 6.25 0.9 Q7.7 0.9 7.7 2.6 Z" fill="#fff" stroke="#d6d6d6" stroke-width="0.6"/><circle cx="6.25" cy="4.6" r="0.9" fill="none" stroke="#9cc6ec" stroke-width="0.6"/><path d="M4.7 7.9 L6.25 5.9 L7.8 7.9" fill="none" stroke="#9cc6ec" stroke-width="0.6"/></svg>
<div class="a row" style="top:424.69px;background:#f8f8f8"><span style="left:67px">Strategy Consulting</span><span style="left:145.5px">Robinson Bret</span><span style="left:609.5px">MA0022</span></div>
<div class="a ws" style="top:424.69px;background:#dcebdc"><span>Flexible hours: 4...</span></div>
<svg class="a" style="left:961px;top:427.29px" width="12" height="12" viewBox="0 0 12 12"><rect x="2.6" y="2.2" width="7.3" height="7.2" rx="0.5" fill="#fff" stroke="#e8b860" stroke-width="0.9"/><path d="M4.8 2.6 Q4.8 0.9 6.25 0.9 Q7.7 0.9 7.7 2.6 Z" fill="#fff" stroke="#d6d6d6" stroke-width="0.6"/><circle cx="6.25" cy="4.6" r="0.9" fill="none" stroke="#9cc6ec" stroke-width="0.6"/><path d="M4.7 7.9 L6.25 5.9 L7.8 7.9" fill="none" stroke="#9cc6ec" stroke-width="0.6"/></svg>
<div class="a row" style="top:440.36px;background:#ffffff"><span style="left:67px">Strategy Consulting</span><span style="left:145.5px">Thompson Grace</span><span style="left:609.5px">MA0023</span></div>
<div class="a ws" style="top:440.36px;background:#dcebdc"><span>Flexible hours: 4...</span></div>
<svg class="a" style="left:961px;top:442.96px" width="12" height="12" viewBox="0 0 12 12"><rect x="2.6" y="2.2" width="7.3" height="7.2" rx="0.5" fill="#fff" stroke="#e8b860" stroke-width="0.9"/><path d="M4.8 2.6 Q4.8 0.9 6.25 0.9 Q7.7 0.9 7.7 2.6 Z" fill="#fff" stroke="#d6d6d6" stroke-width="0.6"/><circle cx="6.25" cy="4.6" r="0.9" fill="none" stroke="#9cc6ec" stroke-width="0.6"/><path d="M4.7 7.9 L6.25 5.9 L7.8 7.9" fill="none" stroke="#9cc6ec" stroke-width="0.6"/></svg>
<div class="a row" style="top:456.03px;background:#f8f8f8"><span style="left:67px">Strategy Consulting</span><span style="left:145.5px">Blank Robert</span><span style="left:609.5px">MA0037</span></div>
<div class="a ws" style="top:456.03px;background:#dcebdc"><span>Flexible hours: 4...</span></div>
<svg class="a" style="left:961px;top:458.63px" width="12" height="12" viewBox="0 0 12 12"><rect x="2.6" y="2.2" width="7.3" height="7.2" rx="0.5" fill="#fff" stroke="#e8b860" stroke-width="0.9"/><path d="M4.8 2.6 Q4.8 0.9 6.25 0.9 Q7.7 0.9 7.7 2.6 Z" fill="#fff" stroke="#d6d6d6" stroke-width="0.6"/><circle cx="6.25" cy="4.6" r="0.9" fill="none" stroke="#9cc6ec" stroke-width="0.6"/><path d="M4.7 7.9 L6.25 5.9 L7.8 7.9" fill="none" stroke="#9cc6ec" stroke-width="0.6"/></svg>
<div class="a row" style="top:471.70px;background:#ffffff"><span style="left:67px">Strategy Consulting</span><span style="left:145.5px">Connor John</span><span style="left:609.5px">MA0039</span></div>
<div class="a ws" style="top:471.70px;background:#dcebdc"><span>Flexible hours: 4...</span></div>
<svg class="a" style="left:961px;top:474.30px" width="12" height="12" viewBox="0 0 12 12"><rect x="2.6" y="2.2" width="7.3" height="7.2" rx="0.5" fill="#fff" stroke="#e8b860" stroke-width="0.9"/><path d="M4.8 2.6 Q4.8 0.9 6.25 0.9 Q7.7 0.9 7.7 2.6 Z" fill="#fff" stroke="#d6d6d6" stroke-width="0.6"/><circle cx="6.25" cy="4.6" r="0.9" fill="none" stroke="#9cc6ec" stroke-width="0.6"/><path d="M4.7 7.9 L6.25 5.9 L7.8 7.9" fill="none" stroke="#9cc6ec" stroke-width="0.6"/></svg>
<div class="a" style="left:157px;top:173.97px;width:699px;height:1px;background:#d3e1f1"></div>
<div class="a" style="left:856px;top:173.97px;width:65px;height:1px;background:#d9e8da"></div>
<div class="a" style="left:921px;top:173.97px;width:57px;height:1px;background:#d3e1f1"></div>
<div class="a" style="left:157px;top:189.64px;width:699px;height:1px;background:#d3e1f1"></div>
<div class="a" style="left:856px;top:189.64px;width:65px;height:1px;background:#d9e8da"></div>
<div class="a" style="left:921px;top:189.64px;width:57px;height:1px;background:#d3e1f1"></div>
<div class="a" style="left:157px;top:205.31px;width:699px;height:1px;background:#d3e1f1"></div>
<div class="a" style="left:856px;top:205.31px;width:65px;height:1px;background:#d9e8da"></div>
<div class="a" style="left:921px;top:205.31px;width:57px;height:1px;background:#d3e1f1"></div>
<div class="a" style="left:157px;top:220.98px;width:699px;height:1px;background:#d3e1f1"></div>
<div class="a" style="left:856px;top:220.98px;width:65px;height:1px;background:#d9e8da"></div>
<div class="a" style="left:921px;top:220.98px;width:57px;height:1px;background:#d3e1f1"></div>
<div class="a" style="left:157px;top:236.65px;width:699px;height:1px;background:#ececec"></div>
<div class="a" style="left:856px;top:236.65px;width:65px;height:1px;background:#d9e8da"></div>
<div class="a" style="left:921px;top:236.65px;width:57px;height:1px;background:#ececec"></div>
<div class="a" style="left:157px;top:252.32px;width:699px;height:1px;background:#ececec"></div>
<div class="a" style="left:856px;top:252.32px;width:65px;height:1px;background:#e2eee2"></div>
<div class="a" style="left:921px;top:252.32px;width:57px;height:1px;background:#ececec"></div>
<div class="a" style="left:157px;top:267.99px;width:699px;height:1px;background:#ececec"></div>
<div class="a" style="left:856px;top:267.99px;width:65px;height:1px;background:#e2eee2"></div>
<div class="a" style="left:921px;top:267.99px;width:57px;height:1px;background:#ececec"></div>
<div class="a" style="left:157px;top:283.66px;width:699px;height:1px;background:#ececec"></div>
<div class="a" style="left:856px;top:283.66px;width:65px;height:1px;background:#e2eee2"></div>
<div class="a" style="left:921px;top:283.66px;width:57px;height:1px;background:#ececec"></div>
<div class="a" style="left:157px;top:299.33px;width:699px;height:1px;background:#ececec"></div>
<div class="a" style="left:856px;top:299.33px;width:65px;height:1px;background:#e2eee2"></div>
<div class="a" style="left:921px;top:299.33px;width:57px;height:1px;background:#ececec"></div>
<div class="a" style="left:157px;top:315.00px;width:699px;height:1px;background:#ececec"></div>
<div class="a" style="left:856px;top:315.00px;width:65px;height:1px;background:#e2eee2"></div>
<div class="a" style="left:921px;top:315.00px;width:57px;height:1px;background:#ececec"></div>
<div class="a" style="left:157px;top:330.67px;width:699px;height:1px;background:#ececec"></div>
<div class="a" style="left:856px;top:330.67px;width:65px;height:1px;background:#e2eee2"></div>
<div class="a" style="left:921px;top:330.67px;width:57px;height:1px;background:#ececec"></div>
<div class="a" style="left:157px;top:346.34px;width:699px;height:1px;background:#ececec"></div>
<div class="a" style="left:856px;top:346.34px;width:65px;height:1px;background:#e2eee2"></div>
<div class="a" style="left:921px;top:346.34px;width:57px;height:1px;background:#ececec"></div>
<div class="a" style="left:157px;top:362.01px;width:699px;height:1px;background:#ececec"></div>
<div class="a" style="left:856px;top:362.01px;width:65px;height:1px;background:#e2eee2"></div>
<div class="a" style="left:921px;top:362.01px;width:57px;height:1px;background:#ececec"></div>
<div class="a" style="left:157px;top:377.68px;width:699px;height:1px;background:#ececec"></div>
<div class="a" style="left:856px;top:377.68px;width:65px;height:1px;background:#e2eee2"></div>
<div class="a" style="left:921px;top:377.68px;width:57px;height:1px;background:#ececec"></div>
<div class="a" style="left:157px;top:393.35px;width:699px;height:1px;background:#ececec"></div>
<div class="a" style="left:856px;top:393.35px;width:65px;height:1px;background:#e2eee2"></div>
<div class="a" style="left:921px;top:393.35px;width:57px;height:1px;background:#ececec"></div>
<div class="a" style="left:157px;top:409.02px;width:699px;height:1px;background:#ececec"></div>
<div class="a" style="left:856px;top:409.02px;width:65px;height:1px;background:#e2eee2"></div>
<div class="a" style="left:921px;top:409.02px;width:57px;height:1px;background:#ececec"></div>
<div class="a" style="left:157px;top:424.69px;width:699px;height:1px;background:#ececec"></div>
<div class="a" style="left:856px;top:424.69px;width:65px;height:1px;background:#e2eee2"></div>
<div class="a" style="left:921px;top:424.69px;width:57px;height:1px;background:#ececec"></div>
<div class="a" style="left:157px;top:440.36px;width:699px;height:1px;background:#ececec"></div>
<div class="a" style="left:856px;top:440.36px;width:65px;height:1px;background:#e2eee2"></div>
<div class="a" style="left:921px;top:440.36px;width:57px;height:1px;background:#ececec"></div>
<div class="a" style="left:157px;top:456.03px;width:699px;height:1px;background:#ececec"></div>
<div class="a" style="left:856px;top:456.03px;width:65px;height:1px;background:#e2eee2"></div>
<div class="a" style="left:921px;top:456.03px;width:57px;height:1px;background:#ececec"></div>
<div class="a" style="left:157px;top:471.70px;width:699px;height:1px;background:#ececec"></div>
<div class="a" style="left:856px;top:471.70px;width:65px;height:1px;background:#e2eee2"></div>
<div class="a" style="left:921px;top:471.70px;width:57px;height:1px;background:#ececec"></div>
<div class="a" style="left:157px;top:487.37px;width:699px;height:1px;background:#ececec"></div>
<div class="a" style="left:856px;top:487.37px;width:65px;height:1px;background:#e2eee2"></div>
<div class="a" style="left:921px;top:487.37px;width:57px;height:1px;background:#ececec"></div>
<div class="a" style="left:157px;top:488.2px;width:821px;height:15.2px;background:#eeeefa;border-bottom:1px solid #e8e8f0"></div>
<div class="a" style="left:856px;top:488.2px;width:65px;height:15.2px;background:#dcebdc"></div>
<!-- pager -->
<div class="a" style="left:157px;top:528.2px;width:821px;height:1px;background:#dcdcdc"></div>
<svg class="a" style="left:158px;top:532px" width="210" height="16" viewBox="158 532 210 16"><g fill="none" stroke="#c4c4c4" stroke-width="0.9">
<path d="M166.5 534.5 L161.5 539.5 L166.5 544.5 M171 534.5 L166 539.5 L171 544.5"/>
<path d="M190 534.5 L185 539.5 L190 544.5"/>
<path d="M304.5 534.5 L309.5 539.5 L304.5 544.5"/>
<path d="M323 534.5 L328 539.5 L323 544.5 M327.5 534.5 L332.5 539.5 L327.5 544.5"/>
</g>
<g stroke="#d6d6d6" stroke-width="0.9"><path d="M200.3 535.5 V544 M293 535.5 V544 M340.9 535.5 V544"/></g>
<path d="M358.8 536.2 A4.8 4.8 0 1 0 359.6 539.2" fill="none" stroke="#bdbdbd" stroke-width="1"/><path d="M356.3 536.6 L359 536.4 L359.1 533.5" fill="none" stroke="#bdbdbd" stroke-width="1"/>
</svg>
<div class="pg" style="left:210.7px;top:534.8px;font-size:7.1px">Page</div>
<div class="a" style="left:238px;top:532.3px;width:26.3px;height:14.4px;border:1px solid #d4d4d4;background:#fff"></div>
<div class="pg" style="left:243.3px;top:534.6px">1</div>
<div class="pg" style="left:270.6px;top:534.6px">of 1</div>
<div class="pg" style="left:746.2px;top:534.8px;font-size:7.35px">Showing 1 - 21 of 21</div>
<div class="a" style="left:824.5px;top:535.5px;width:1px;height:8.5px;background:#ddd"></div>
<div class="pg" style="left:834.7px;top:534.8px;font-size:7.4px">Show</div>
<div class="a" style="left:862.7px;top:532.2px;width:35.1px;height:14.6px;border:1px solid #d4d4d4;background:#fff"></div>
<div class="pg" style="left:867.3px;top:534.8px;font-size:7.4px">100</div>
<svg class="a" style="left:887.0px;top:537.0px" width="8" height="5" viewBox="0 0 8 5"><path d="M0.8 0.8 L4 3.8 L7.2 0.8" fill="none" stroke="#aaa" stroke-width="0.8"/></svg>
<div class="pg" style="left:907.7px;top:534.8px;font-size:7.3px">Elements per Page</div>

<svg class="a" style="left:552px;top:112px" width="22" height="24" viewBox="552 112 22 24"><path d="M560.6 126 V118.7 Q560.6 117.3 561.7 117.3 Q562.8 117.3 562.8 118.7 V122.2 Q563.6 121.3 564.6 121.7 Q565.6 121.5 566.3 122.3 Q567.1 121.7 567.9 122.2 Q568.8 122.6 568.8 123.8 V128.6 Q568.8 132.6 564.6 132.6 Q561.9 132.6 560.4 130.6 L557.6 127.4 Q557.1 126.6 557.8 126.2 Q558.8 125.7 560.6 127.3 Z" fill="#fff" stroke="#3a3a3a" stroke-width="0.95" stroke-linejoin="round"/><path d="M564.6 121.9 V124.6 M566.4 122.4 V124.6" stroke="#3a3a3a" stroke-width="0.7"/></svg>

<!-- frame -->
<div class="a" style="left:0;top:0;width:1px;height:551px;background:#9c9c9c"></div>
<div class="a" style="left:979px;top:0;width:1px;height:551px;background:#bdbdbd"></div>
<div class="a" style="left:0;top:550px;width:980px;height:1px;background:#b8b8b8"></div>

</body></html>
